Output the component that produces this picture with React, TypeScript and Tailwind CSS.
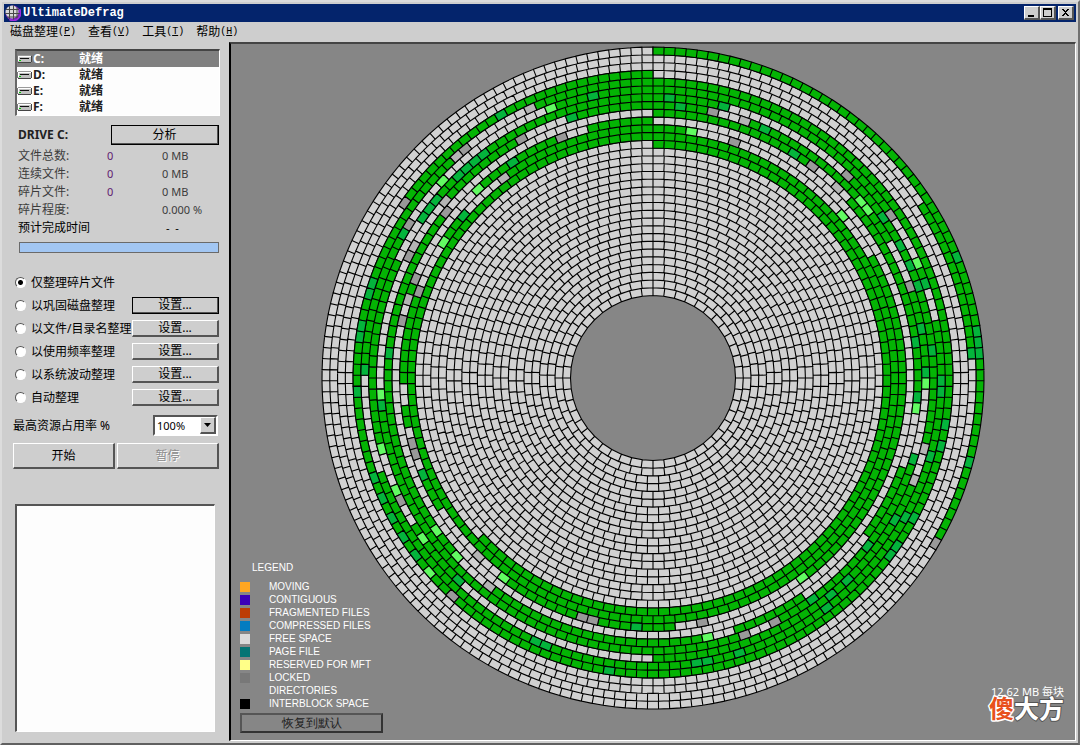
import React from 'react';

type Kind = 'free' | 'used' | 'page' | 'hot' | 'locked' | 'dim';

const KIND_COLORS: Record<Kind, string> = {
  free: '#d1d1d1',
  used: '#04b404',
  page: '#04b43c',
  hot: '#62fb62',
  locked: '#999999',
  dim: '#b4b4b4',
};

const OUTER = 331;
const INNER = 82.5;
const RINGS = 32;
const STEP = (OUTER - INNER) / RINGS;

// used ranges of every ring, in degrees clockwise from 12 o'clock
const USED: [number, number][][] = [
  [[0, 119.5]],
  [[57, 86.5]],
  [],
  [[306, 360]],
  [[0, 318], [336.5, 360]],
  [[0, 56.5], [64.5, 71.5], [78.5, 250.4], [269.5, 301.5], [340, 360]],
  [[0, 16], [45, 105], [113, 180], [222, 238], [245, 247.5], [256, 295], [304, 360]],
  [[0, 12], [20.5, 60], [71, 91.5], [106, 152], [162, 267], [311, 331], [342, 360]],
  [[0, 36], [47, 98], [110, 125.5], [146.5, 164], [167, 217], [226.5, 308]],
  [[289, 291.5], [317, 338], [345, 360]],
  [[0, 10], [61.5, 143], [176, 218], [239.5, 248], [258.7, 263.5], [268.8, 289.5], [302, 311.5], [325, 360]],
  [[0, 360]],
  [[0, 227]],
];

// single blocks, by a point inside them measured from the hub
const MARKS: Partial<Record<Kind, [number, number][]>> = {
  page: [
    [16, -280], [27, -272], [70, -272], [112, -249], [141, -224], [230, -161], [247, -133], [257, -113],
    [265, -92], [273, -95], [304, -121], [324, -47], [325, -35], [326, -25], [319, -25], [268, -50],
    [263, -36], [279, -28], [273, -6], [288, 2], [288, 13], [264, 19], [293, 46], [288, 69], [277, 78],
    [316, 84], [261, 80], [261, 139], [252, 140], [243, 142], [214, 168], [244, 169], [237, 176],
    [195, 202], [178, 217], [159, 221], [173, 230], [76, 254], [86, 275], [44, 285], [55, 283],
    [-17, 249], [-44, 293], [-107, 267], [-117, 263], [-195, 202], [-292, -52], [-294, -41], [-264, -25],
    [-288, -8], [-296, 14], [-271, 28], [-279, 100], [-230, 97], [-271, 120], [-261, 140], [-250, 159],
    [-237, 176], [-152, -264], [-60, -282], [-81, -260], [-141, -216], [-170, -224], [-178, -217],
    [-187, -210], [-195, -202], [-190, -163], [-216, -178], [-222, -170], [-231, -160], [-250, -144],
    [-280, -95], [-284, -85],
  ],
  hot: [
    [38, -247], [206, -178], [215, -169], [189, -163], [264, -115], [273, 5], [263, 31], [149, 200],
    [55, 259], [-150, 200], [-196, 178], [-272, 16], [-272, 71], [-257, 112], [-217, 152], [-230, 161],
    [-224, 195], [-102, -270], [-211, -197], [-175, -189], [-210, -136],
  ],
  locked: [
    [60, -267], [81, -237], [159, -213], [194, -203], [238, -164], [257, -92], [283, 165], [49, 244],
    [92, 257], [122, 244], [-61, 242], [-70, 239], [-200, 217], [-241, 65], [-238, 76], [-252, 123],
    [-251, -57], [-91, -241], [-132, -240], [-188, -229], [-207, -166], [-249, -175], [-244, -154],
    [-245, -121], [-238, -98], [-234, -87],
  ],
  dim: [
    [91, -258], [184, -191], [271, 70], [261, 102], [-163, 207], [-174, 178], [-122, -270], [-197, -223],
    [-150, -201], [-209, -175], [-241, -131], [-245, -80],
  ],
  free: [[71, 256]],
};

function blocksInRing(ring: number) {
  return 187 - Math.floor(ring / 2) * 9 - (ring % 2) * 4;
}

function buildMarks() {
  const marks = new Map<string, Kind>();
  (Object.keys(MARKS) as Kind[]).forEach((kind) => {
    MARKS[kind]?.forEach(([x, y]) => {
      const ring = Math.floor((OUTER - Math.hypot(x, y)) / STEP);
      const turn = (Math.atan2(x, -y) / (2 * Math.PI) + 1) % 1;
      marks.set(`${ring}:${Math.floor(turn * blocksInRing(ring))}`, kind);
    });
  });
  return marks;
}

function point(r: number, turn: number) {
  const a = turn * 2 * Math.PI;
  return `${(r * Math.sin(a)).toFixed(2)} ${(-r * Math.cos(a)).toFixed(2)}`;
}

function buildPaths() {
  const marks = buildMarks();
  const paths: Record<Kind, string> = { free: '', used: '', page: '', hot: '', locked: '', dim: '' };
  for (let ring = 0; ring < RINGS; ring++) {
    const count = blocksInRing(ring);
    const r1 = OUTER - ring * STEP;
    const r0 = r1 - STEP;
    for (let i = 0; i < count; i++) {
      const deg = ((i + 0.5) / count) * 360;
      const used = (USED[ring] ?? []).some(([from, to]) => deg >= from && deg < to);
      const kind = marks.get(`${ring}:${i}`) ?? (used ? 'used' : 'free');
      const a = i / count;
      const b = (i + 1) / count;
      paths[kind] += `M${point(r1, a)}L${point(r1, b)}L${point(r0, b)}L${point(r0, a)}Z`;
    }
  }
  return paths;
}

const PATHS = buildPaths();

function DiskMap() {
  return (
    <svg viewBox="-332 -332 664 664" className="w-[664px] max-w-full" role="img" aria-label="Disk map">
      {(Object.keys(PATHS) as Kind[]).map((kind) => (
        <path key={kind} d={PATHS[kind]} fill={KIND_COLORS[kind]} stroke="#000" strokeWidth="1.1" />
      ))}
    </svg>
  );
}

const LEGEND = [
  { label: 'MOVING', color: 'bg-[#ffa621]' },
  { label: 'CONTIGUOUS', color: 'bg-[#3c00b8]' },
  { label: 'FRAGMENTED FILES', color: 'bg-[#bc3c04]' },
  { label: 'COMPRESSED FILES', color: 'bg-[#047cc0]' },
  { label: 'FREE SPACE', color: 'bg-[#dadada]' },
  { label: 'PAGE FILE', color: 'bg-[#047474]' },
  { label: 'RESERVED FOR MFT', color: 'bg-[#ffff88]' },
  { label: 'LOCKED', color: 'bg-[#787878]' },
  { label: 'DIRECTORIES', color: 'bg-transparent' },
  { label: 'INTERBLOCK SPACE', color: 'bg-black' },
];

const MENUS = [
  { label: '磁盘整理', key: 'P' },
  { label: '查看', key: 'V' },
  { label: '工具', key: 'T' },
  { label: '帮助', key: 'H' },
];

const STATS = [
  { label: '文件总数:', count: '0', size: '0 MB' },
  { label: '连续文件:', count: '0', size: '0 MB' },
  { label: '碎片文件:', count: '0', size: '0 MB' },
  { label: '碎片程度:', count: '', size: '0.000 %' },
];

const METHODS = ['仅整理碎片文件', '以巩固磁盘整理', '以文件/目录名整理', '以使用频率整理', '以系统波动整理', '自动整理'];

const RAISED = 'border-t border-l border-r-2 border-b-2 border-t-white border-l-white border-r-[#555] border-b-[#555] bg-[#cecece]';

function DriveIcon() {
  return (
    <svg width="15" height="8" viewBox="0 0 15 8" className="shrink-0" shapeRendering="crispEdges" aria-hidden="true">
      <path d="M1 0h13v1H1z" fill="#9a9a9a" />
      <path d="M14 1h1v6h-1v1H1V7h13z" fill="#444" />
      <path d="M0 1h1v6H0z" fill="#777" />
      <path d="M1 1h13v1H1zM1 2h1v4H1z" fill="#fff" />
      <path d="M2 2h12v5H1V6h1z" fill="#c0c0c0" />
      <path d="M3 3h9v1H3z" fill="#111" />
      <path d="M2 5h2v1H2z" fill="#0c0" />
    </svg>
  );
}

function AppIcon() {
  return (
    <svg width="16" height="16" viewBox="0 0 16 16" aria-hidden="true">
      <circle cx="8" cy="8" r="7.5" fill="#7a1fc0" />
      <circle cx="7" cy="7" r="6.5" fill="#d8d8d8" />
      <path d="M4.5 1v13M8.5 0v15M12 2v12M1 4.5h13M0 8.5h15M2 12h12" stroke="#4a4a4a" strokeWidth="1" />
      <path d="M14.5 4a7.5 7.5 0 0 1-10 10.5" stroke="#9a2be0" strokeWidth="1.6" fill="none" />
    </svg>
  );
}

function TitleButton({ label, children }: { label: string; children: React.ReactNode }) {
  return (
    <button aria-label={label} className={`flex h-[14px] w-[16px] items-center justify-center ${RAISED}`}>
      <svg width="10" height="10" viewBox="0 0 10 10" shapeRendering="crispEdges" aria-hidden="true">
        {children}
      </svg>
    </button>
  );
}

function Sidebar() {
  return (
    <aside className="flex w-[225px] shrink-0 flex-col pt-[7px] pr-[10px] pb-[9px] pl-[9px]">
      <ul className="-mr-px ml-[2px] border border-t-2 border-l-2 border-t-[#444] border-l-[#666] border-r-white border-b-white bg-[#fdfdfd] font-bold">
        {['C:', 'D:', 'E:', 'F:'].map((drive, i) => (
          <li key={drive}>
            <button
              className={`flex h-4 w-full items-center text-left ${i === 0 ? 'bg-[#808080] text-white' : 'text-[#222]'}`}
            >
              <DriveIcon />
              <span className="w-[47px] pl-px">{drive}</span>
              <span>就绪</span>
            </button>
          </li>
        ))}
      </ul>

      <div className="mt-[9px] ml-[5px] flex items-center justify-between">
        <h2 className="text-[12px] font-bold text-[#222]">DRIVE C:</h2>
        <button className={`h-5 w-[108px] outline outline-1 -outline-offset-1 outline-black ${RAISED} border-2`}>分析</button>
      </div>

      <table className="mt-[2px] ml-[5px] text-[#3c3c3c]">
        <tbody>
          {STATS.map((row) => (
            <tr key={row.label} className="h-[18px]">
              <th scope="row" className="w-[89px] p-0 text-left font-normal">{row.label}</th>
              <td className="w-[55px] p-0 text-[11px] text-[#602070]">{row.count}</td>
              <td className="p-0 text-[11px]">{row.size}</td>
            </tr>
          ))}
          <tr className="h-[18px] text-black">
            <th scope="row" className="p-0 text-left font-normal">预计完成时间</th>
            <td />
            <td className="p-0 pl-1 text-[11px]">-&nbsp; -</td>
          </tr>
        </tbody>
      </table>
      <div className="mt-[5px] ml-[6px] h-[11px] border border-[#6a6a6a] bg-[#a2c6f2]" />

      <div className="mt-[18px]">
        {METHODS.map((label, i) => (
          <div key={label} className="flex h-[23px] items-center">
            <label className="flex min-w-0 grow items-center gap-[5px] whitespace-nowrap">
              <input
                type="radio"
                name="method"
                defaultChecked={i === 0}
                className="ml-[2px] h-[11px] w-[11px] shrink-0 appearance-none rounded-full border border-t-[#555] border-l-[#555] border-r-white border-b-white bg-white checked:bg-[radial-gradient(circle,#000_2px,#fff_3px)]"
              />
              {label}
            </label>
            {i > 0 && (
              <button
                className={`flex h-[17px] w-[87px] shrink-0 items-center justify-center ${RAISED} ${i === 1 ? 'outline outline-1 -outline-offset-1 outline-black' : ''}`}
              >
                设置...
              </button>
            )}
          </div>
        ))}
      </div>

      <div className="mt-[6px] flex items-center justify-between">
        <label htmlFor="usage">最高资源占用率 %</label>
        <div className="relative mr-px">
          <select
            id="usage"
            className="block h-[21px] w-[65px] appearance-none border-2 border-t-[#555] border-l-[#555] border-r-white border-b-white bg-white pl-[2px] text-[11px]"
          >
            <option>100%</option>
            <option>75%</option>
            <option>50%</option>
          </select>
          <span className={`pointer-events-none absolute top-[2px] right-[2px] flex h-[17px] w-[16px] items-center justify-center ${RAISED}`}>
            <svg width="7" height="4" viewBox="0 0 7 4" aria-hidden="true"><path d="M0 0h7L3.5 4z" /></svg>
          </span>
        </div>
      </div>

      <div className="mt-[7px] flex gap-[2px]">
        <button className={`h-[26px] flex-1 ${RAISED}`}>开始</button>
        <button disabled className={`h-[26px] flex-1 text-[#8c8c8c] [text-shadow:1px_1px_0_#fff] ${RAISED}`}>暂停</button>
      </div>

      <textarea
        readOnly
        aria-label="Log"
        className="mt-[35px] mr-[4px] ml-[2px] grow resize-none border border-t-2 border-l-2 border-t-[#555] border-l-[#555] border-r-white border-b-white bg-[#fdfdfd]"
      />
    </aside>
  );
}

export default function App() {
  return (
    <div className="flex min-h-screen flex-col border-2 border-t-[#dcdcdc] border-l-[#dcdcdc] border-r-[#707070] border-b-[#606060] bg-[#cecece] p-[2px] font-['Noto_Sans','Noto_Sans_CJK_SC',sans-serif] text-[12px] leading-4 text-black">
      <header className="flex h-[18px] items-center bg-[#04246c] pr-[2px] pl-px">
        <AppIcon />
        <h1 className="ml-[2px] grow font-['Liberation_Mono',monospace] text-[12px] font-bold text-white">UltimateDefrag</h1>
        <TitleButton label="Minimize"><path d="M1 7h6v2H1z" /></TitleButton>
        <TitleButton label="Maximize"><path d="M0 0h9v9H0zM1 2v6h7V2z" fillRule="evenodd" /></TitleButton>
        <span className="w-[2px]" />
        <TitleButton label="Close">
          <path d="M1 1h2v1h1v1h1V2h1V1h2v1H7v1H6v1H5v1h1v1h1v1h1v1H6V7H5V6H4v1H3v1H1V7h1V6h1V5h1V4H3V3H2V2H1z" />
        </TitleButton>
      </header>

      <nav className="flex h-[20px] items-center gap-3 pl-[6px]">
        {MENUS.map((menu) => (
          <button key={menu.key} className="flex items-center">
            {menu.label}
            <span className="font-['Liberation_Mono',monospace] text-[10px]">(<u>{menu.key}</u>)</span>
          </button>
        ))}
      </nav>

      <div className="flex grow">
        <Sidebar />
        <main className="relative flex grow items-start justify-center border-t-2 border-l-2 border-r border-b border-t-[#444] border-l-black border-r-white border-b-white bg-[#868686] pt-[2px]">
          <DiskMap />

          <section className="absolute bottom-[7px] left-[9px] font-['Liberation_Sans',sans-serif] text-[10px] text-white">
            <h2 className="mb-[4px] ml-[12px] leading-[16px]">LEGEND</h2>
            <ul>
              {LEGEND.map((item) => (
                <li key={item.label} className="flex h-[13px] items-center gap-[19px] leading-[13px]">
                  <span className={`h-[10px] w-[10px] ${item.color}`} />
                  {item.label}
                </li>
              ))}
            </ul>
            <button className="mt-[3px] block h-5 w-[143px] border-2 border-t-[#555] border-l-[#555] border-r-[#333] border-b-[#333] text-[12px] leading-4 text-[#222]">
              恢复到默认
            </button>
          </section>

          <div className="absolute right-[9px] bottom-[11px] flex flex-col items-end text-white">
            <p className="pr-[2px] text-[11px] leading-[12px]">12.62 MB 每块</p>
            <svg
              width="78"
              height="40"
              viewBox="0 0 78 40"
              className="-mt-[9px] overflow-visible"
              fontSize="25"
              fontWeight="700"
              paintOrder="stroke"
              strokeLinejoin="round"
            >
              <text x="1" y="29" fill="#e8501c" stroke="#fff" strokeWidth="3">傻</text>
              <text x="26" y="29" fill="#fff" stroke="#555" strokeWidth="2">大方</text>
            </svg>
          </div>
        </main>
      </div>
    </div>
  );
}
